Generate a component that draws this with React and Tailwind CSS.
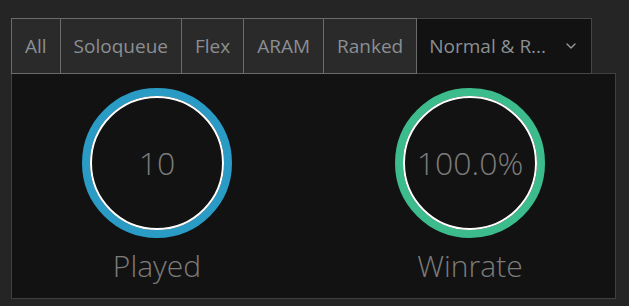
import React from 'react';
import { ChevronDown } from 'lucide-react';

const tabs = ['All', 'Soloqueue', 'Flex', 'ARAM', 'Ranked'];

function Ring({ color, value, label }) {
  return (
    <div className="flex flex-col items-center">
      <div className="relative w-[150px] h-[150px]">
        <svg width="150" height="150" viewBox="0 0 150 150" className="absolute inset-0">
          <circle cx="75" cy="75" r="71" fill="none" stroke={color} strokeWidth="8" />
          <circle cx="75" cy="75" r="66" fill="none" stroke="#ffffff" strokeWidth="2" />
        </svg>
        <div className="absolute inset-0 flex items-center justify-center text-[32px] font-light text-[#7c7c7c]">
          {value}
        </div>
      </div>
      <div className="mt-[5px] text-[30px] font-light text-[#7c7c7c]">{label}</div>
    </div>
  );
}

export default function App() {
  return (
    <div className="min-h-[306px] bg-[#252525] pt-[18px] pl-[11px] pr-[13px] pb-[11px]" style={{ fontFamily: '"Open Sans", sans-serif' }}>
      <div className="relative z-10 -mb-px flex">
        {tabs.map((t, i) => (
          <div
            key={t}
            className={`h-[56px] flex items-center px-[13px] text-[19px] text-[#8b8f93] bg-[#2a2a2a] border-y border-r border-[#6b6b6b] ${i === 0 ? 'border-l' : ''}`}
          >
            {t}
          </div>
        ))}
        <div className="h-[56px] w-[175px] flex items-center justify-between pl-[12px] pr-[12px] text-[19px] text-[#8b8f93] bg-[#121212] border-y border-r border-[#474747]">
          <span>Normal &amp; R...</span>
          <ChevronDown className="w-4 h-4 text-[#9a9a9a]" strokeWidth={2} />
        </div>
      </div>
      <div className="bg-[#121212] border border-[#404040] flex justify-between px-[70px] pt-[14px] pb-[10px]">
        <Ring color="#2a9bc5" value="10" label="Played" />
        <Ring color="#3cbb8c" value="100.0%" label="Winrate" />
      </div>
    </div>
  );
}
